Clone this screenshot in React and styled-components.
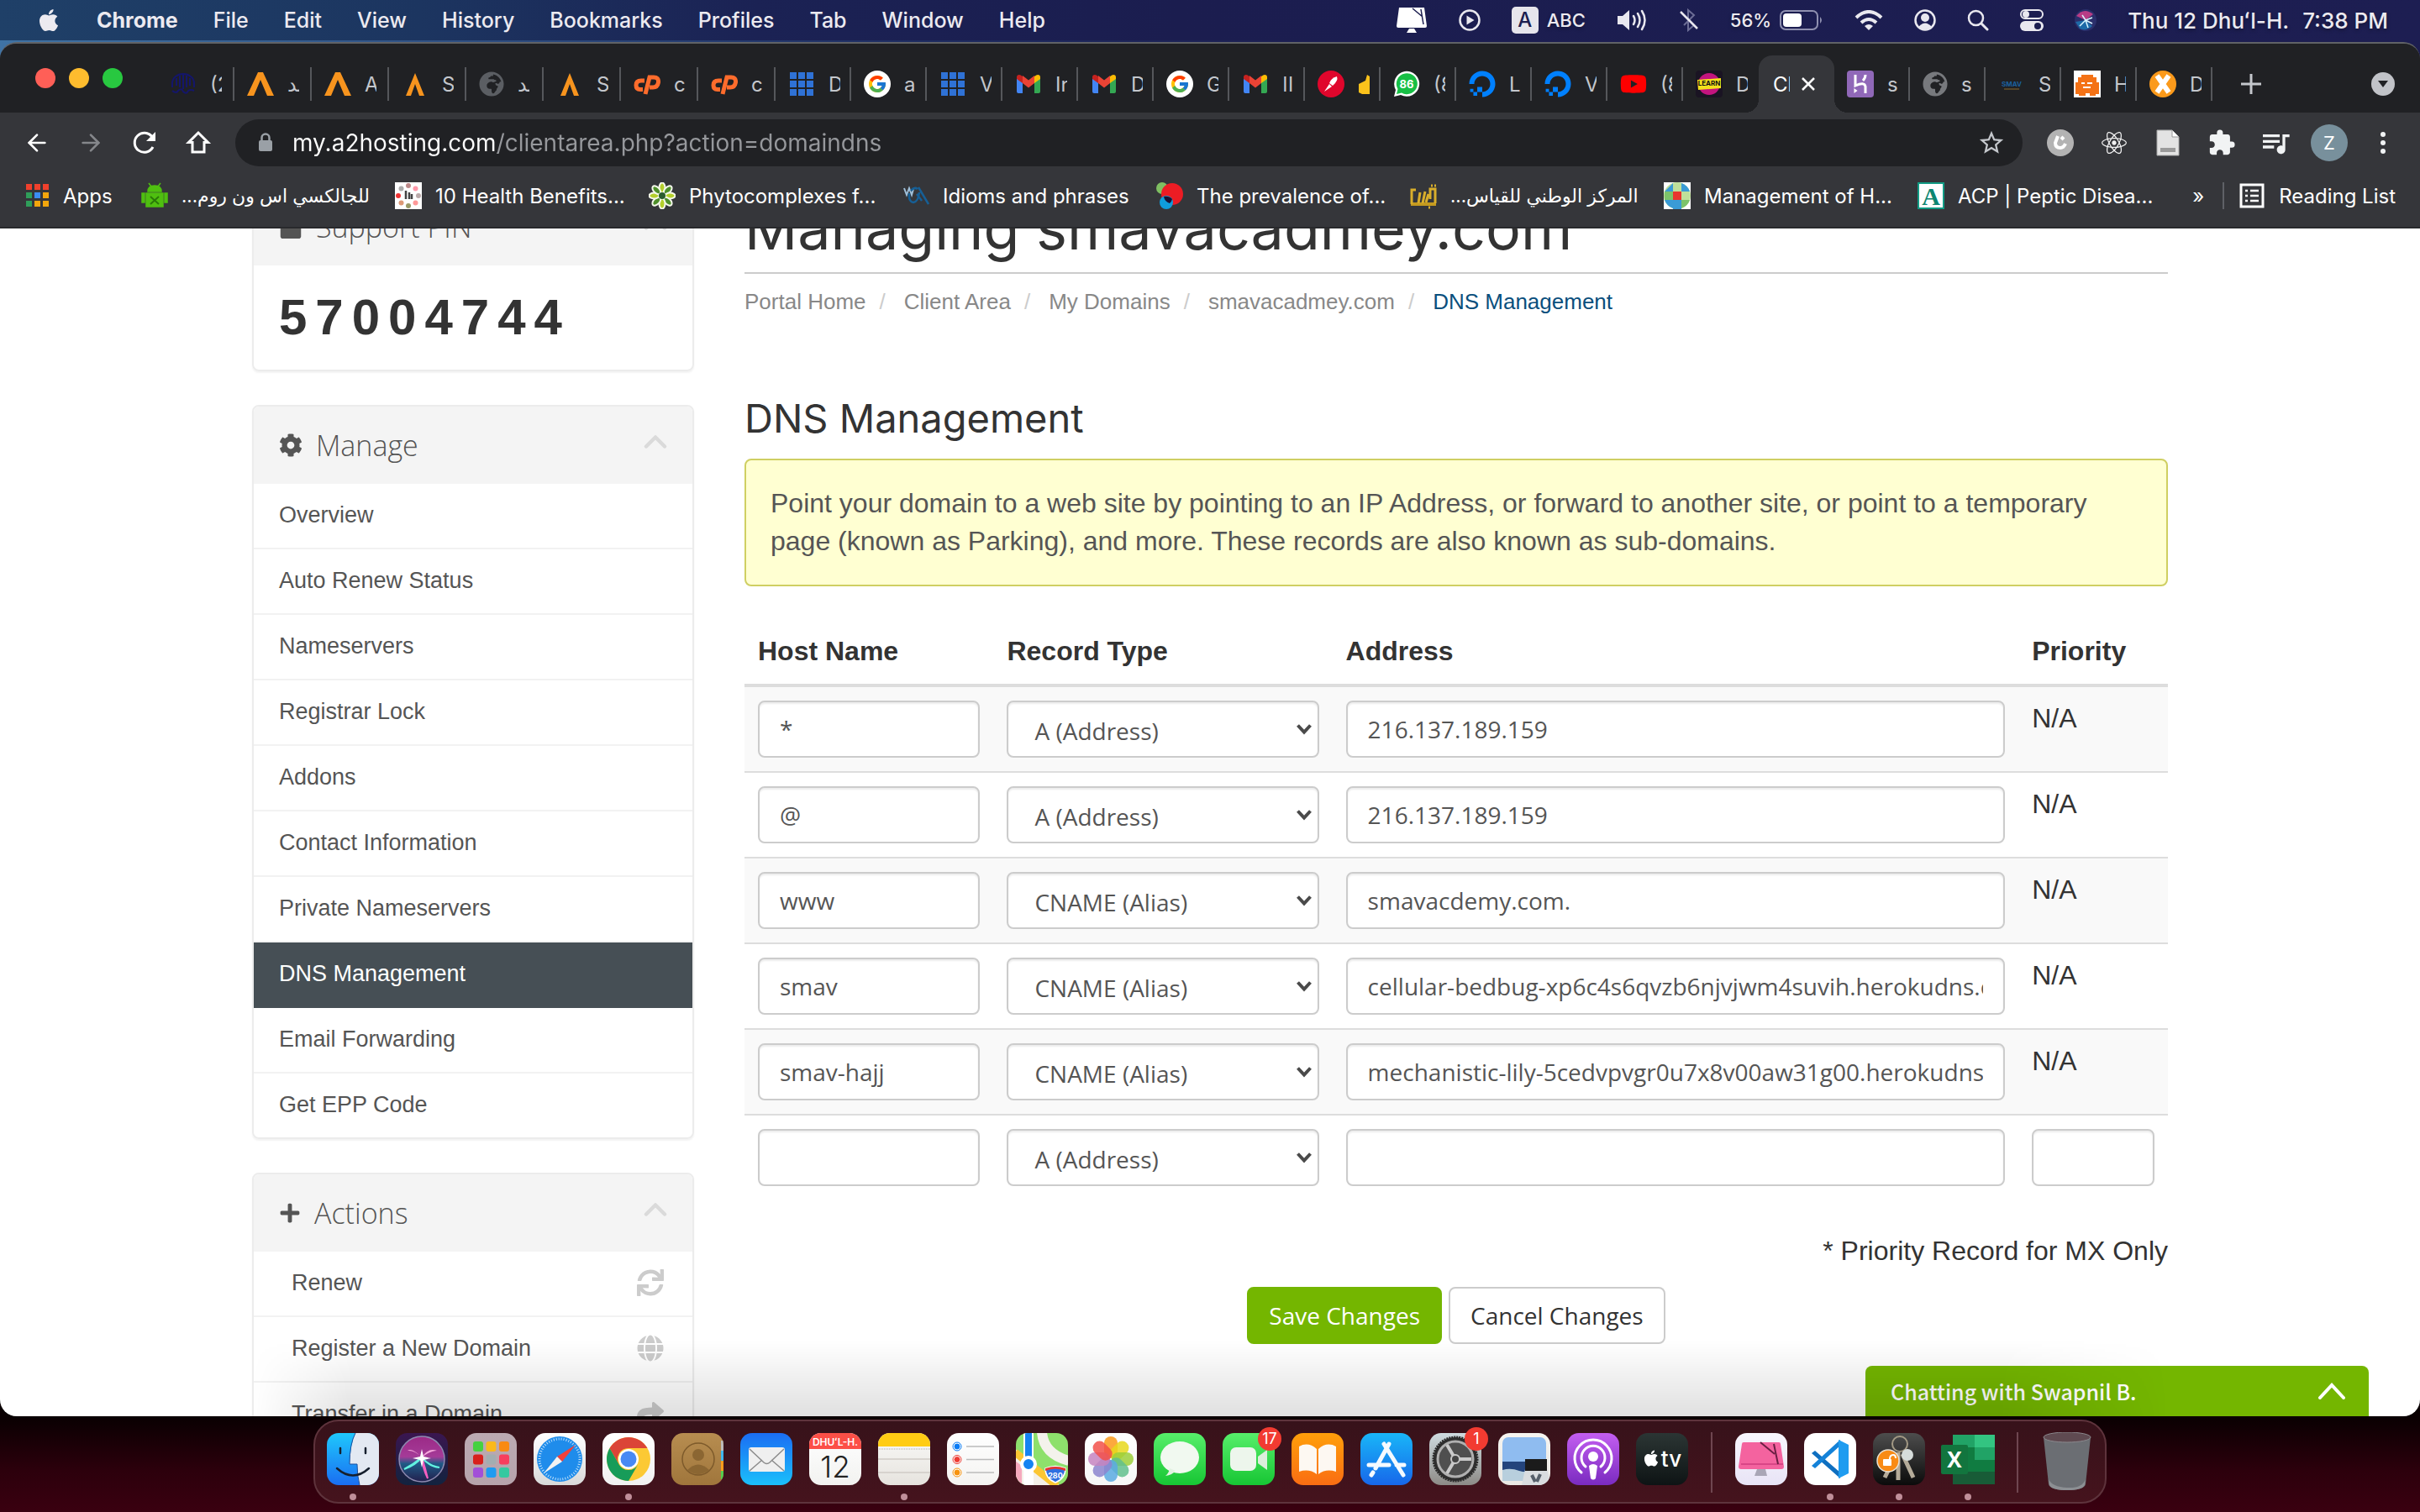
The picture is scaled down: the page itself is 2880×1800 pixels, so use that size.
import React from "react";
import styled, { createGlobalStyle, css } from "styled-components";
import { FaApple, FaDigitalOcean, FaYoutube, FaLock, FaCog, FaPlus, FaSync, FaGlobe, FaShare, FaReact, FaGlobeAfrica } from "react-icons/fa";
import { FcGoogle } from "react-icons/fc";
import { MdExtension, MdQueueMusic, MdStarBorder } from "react-icons/md";
import { ChevronUp, ArrowLeft, ArrowRight } from "lucide-react";

const ui = `Inter, "DejaVu Sans", sans-serif`;
const helvetica = `"Liberation Sans", Arial, sans-serif`;
const openSans = `"Open Sans", "Noto Sans", sans-serif`;

const GlobalStyle = createGlobalStyle`
  *, *::before, *::after { box-sizing: border-box; }
  body { margin: 0; }
  button { border: 0; padding: 0; background: none; font: inherit; color: inherit; cursor: pointer; }
  a { color: inherit; text-decoration: none; }
  ul, ol { list-style: none; margin: 0; padding: 0; }
  h1, h2, h3, p { margin: 0; font-weight: 400; }
  svg { display: block; flex: none; }
`;

/* ---------- desktop ---------- */

const Desktop = styled.div`
  display: flex;
  flex-direction: column;
  height: 100vh;
  overflow: hidden;
  font-family: ${ui};
  background:
    linear-gradient(90deg, #3f73a5, #1d2b60 1100px, #1c1d50 1600px) 0 0 / 100% 90px no-repeat,
    linear-gradient(#0a0002, #0a0002 calc(100% - 112px), #2c000c calc(100% - 50px), #3a0010);
`;

const MenuBar = styled.header`
  display: flex;
  align-items: center;
  justify-content: space-between;
  flex: none;
  height: 48px;
  padding: 0 38px 0 43px;
  margin-bottom: 2px;
  background: linear-gradient(90deg, #1f4068, #1c3560 500px, #1b2254 900px, #1b1d4f 1400px, #1d1e52);
  color: #eceaf0;
  font-size: 25px;
  text-shadow: 0 2px 4px rgba(0, 0, 0, 0.35);
`;

const MenuGroup = styled.nav`
  display: flex;
  align-items: center;
  gap: ${(p) => p.$gap}px;
`;

const MenuButton = styled.button`
  font-weight: ${(p) => (p.$bold ? 700 : 500)};
`;

const InputSource = styled.span`
  display: flex;
  align-items: center;
  gap: 10px;
  font-size: 22px;
  font-weight: 500;
`;

const SourceKey = styled.span`
  width: 32px;
  line-height: 32px;
  border-radius: 5px;
  background: #e6e5ec;
  color: #1b1d4f;
  text-align: center;
  text-shadow: none;
  font-size: 24px;
`;

const Battery = styled(InputSource)``;

const Clock = styled.time`
  display: flex;
  gap: 16px;
  font-weight: 500;
  font-size: 26px;
`;

/* ---------- browser ---------- */

const Browser = styled.section`
  position: relative;
  display: flex;
  flex-direction: column;
  flex: 1;
  min-height: 0;
  overflow: hidden;
  border: 0 solid #606266;
  border-top-width: 2px;
  border-radius: 20px;
  background: #35363a;
  color: #fff;
`;

const TabStrip = styled.div`
  display: flex;
  align-items: flex-end;
  flex: none;
  height: 82px;
  background: #202124;
`;

const TrafficLights = styled.div`
  display: flex;
  gap: 16px;
  align-self: center;
  padding: 0 41px 0 42px;
`;

const WindowButton = styled.button`
  width: 24px;
  height: 24px;
  border-radius: 50%;
  background: ${(p) => p.$color};
`;

const Tab = styled.button`
  display: flex;
  align-items: center;
  flex: 0 0 ${(p) => (p.$wide ? 92 : 90)}px;
  height: 68px;
  padding-left: 15px;
  gap: 16px;
  color: #c4c7cc;
  font-size: 24px;
  background: linear-gradient(#55575b, #55575b) right 14px / 2px 40px no-repeat;
  background-position: right 0 top 14px;
  ${(p) =>
    p.$active &&
    css`
      position: relative;
      gap: 12px;
      padding-left: 17px;
      border-radius: 16px 16px 0 0;
      background: #35363a;
      color: #fff;
      &::before, &::after {
        content: "";
        position: absolute;
        bottom: 0;
        left: -16px;
        width: 16px;
        height: 16px;
        background: radial-gradient(circle at 0 0, transparent 16px, #35363a 16px);
      }
      &::after { left: auto; right: -16px; transform: scaleX(-1); }
    `}
  ${(p) => p.$plain && css`background: none;`}
`;

const TabLabel = styled.span`
  width: ${(p) => (p.$active ? 20 : 14)}px;
  overflow: hidden;
  white-space: nowrap;
  text-align: left;
`;

const NewTab = styled.button`
  margin-left: 34px;
  height: 68px;
`;

const TabSearch = styled.button`
  display: grid;
  place-items: center;
  width: 28px;
  height: 28px;
  margin: 0 30px 20px auto;
  border-radius: 50%;
  background: #c1c3c8;
`;

const Toolbar = styled.div`
  display: flex;
  align-items: center;
  flex: none;
  height: 72px;
  padding: 0 22px 0 28px;
`;

const NavButtons = styled.div`
  display: flex;
  gap: 32px;
  margin-right: 28px;
`;

const Omnibox = styled.label`
  display: flex;
  align-items: center;
  flex: 1;
  height: 56px;
  padding: 0 20px 0 26px;
  gap: 22px;
  border-radius: 28px;
  background: #202124;
`;

const UrlInput = styled.input`
  flex: 1;
  min-width: 0;
  padding: 0;
  border: 0;
  outline: 0;
  color: #fff;
  font: 28px ${ui};
  background: linear-gradient(90deg, #fff 244px, #96989c 244px);
  background-clip: text;
  -webkit-text-fill-color: transparent;
`;

const Extensions = styled.div`
  display: flex;
  gap: 20px;
  margin-left: 23px;
  button { display: grid; place-items: center; width: 44px; height: 44px; }
`;

const Avatar = styled.button`
  border-radius: 50%;
  background: #78909c;
  font-size: 22px;
`;

const Bookmarks = styled.nav`
  display: flex;
  align-items: center;
  flex: none;
  height: 66px;
  padding: 0 29px 10px 31px;
  border-bottom: 2px solid #28292c;
  font-size: 24px;
`;

const Bookmark = styled.a`
  display: flex;
  align-items: center;
  gap: 16px;
  flex: 0 0 ${(p) => p.$width}px;
  min-width: 0;
  white-space: nowrap;
`;

const BookmarkLabel = styled.span`
  font-size: ${(p) => (p.$rtl ? 22 : 24)}px;
`;

const MoreBookmarks = styled.button`
  margin: 0 22px 0 auto;
`;

const ReadingList = styled.button`
  display: flex;
  align-items: center;
  gap: 17px;
  padding-left: 20px;
  height: 56px;
  background: linear-gradient(#5f6166, #5f6166) left center / 2px 32px no-repeat;
`;

/* ---------- web page ---------- */

const Viewport = styled.main`
  position: relative;
  flex: 1;
  min-height: 0;
  overflow: hidden;
  background: #fff;
  color: #333;
  font: 32px/46px ${helvetica};
  &::after {
    content: "";
    position: absolute;
    inset: auto 300px 0 300px;
    height: 90px;
    background: linear-gradient(transparent, rgba(0, 0, 0, 0.12));
    mask-image: linear-gradient(90deg, transparent, #000 120px, #000 calc(100% - 200px), transparent);
    pointer-events: none;
  }
`;

const Page = styled.div`
  display: grid;
  grid-template-columns: 526px minmax(0, 1fr);
  gap: 60px;
  max-width: 2280px;
  margin: -50px auto 0;
`;

const Sidebar = styled.aside`
  display: flex;
  flex-direction: column;
  gap: 40px;
`;

const Panel = styled.section`
  border: 2px solid #ececec;
  border-radius: 8px;
  box-shadow: 0 2px 2px rgba(0, 0, 0, 0.05);
  overflow: hidden;
  flex: none;
`;

const PanelHead = styled.h3`
  display: flex;
  align-items: center;
  gap: 16px;
  height: 92px;
  padding: 0 22px 0 30px;
  background: #f4f4f4;
  color: #555;
  font: 300 34px/46px ${openSans};
  button { margin: 0 0 8px auto; color: #dadada; }
`;

const Pin = styled.p`
  padding: 27px 30px;
  font-size: 60px;
  line-height: 70px;
  font-weight: 700;
  letter-spacing: 10px;
`;

const SideLink = styled.a`
  display: flex;
  align-items: center;
  justify-content: space-between;
  height: 78px;
  padding: 0 ${(p) => (p.$inset ? 34 : 30)}px 2px ${(p) => (p.$inset ? 45 : 30)}px;
  border-bottom: 2px solid #f2f2f2;
  font-size: 27px;
  color: #555;
  svg { color: #ccc; }
  ${(p) => p.$active && css`background: #464f55; color: #fff; border-color: #464f55;`}
  li:last-child & { border-bottom: 0; height: 76px; }
`;

const Title = styled.h1`
  padding-bottom: 2px;
  border-bottom: 2px solid #ccc;
  font: 400 70px/100px ${ui};
`;

const Crumbs = styled.ol`
  display: flex;
  margin-top: 13px;
  font-size: 26px;
  line-height: 40px;
  color: #888;
  li + li::before { content: "/"; margin: 0 22px 0 16px; color: #ccc; }
  li:last-child a { color: #0a4f7d; }
`;

const Heading = styled.h2`
  margin: 89px 0 18px;
  font: 400 47px/60px ${ui};
`;

const Notice = styled.p`
  padding: 29px 29px 29px;
  border: 2px solid #cfcf62;
  border-radius: 8px;
  background: #ffffd2;
  color: #555;
  font-size: 32px;
  line-height: 45px;
`;

const Records = styled.table`
  width: 100%;
  margin-top: 38px;
  table-layout: fixed;
  border-collapse: separate;
  border-spacing: 0;
  th { padding: 16px; border-bottom: 4px solid #ddd; text-align: left; }
  td { padding: 16px; border-bottom: 2px solid #ddd; vertical-align: top; line-height: 42px; }
  tbody tr:nth-child(odd) { background: #f9f9f9; }
  tbody tr:last-child td { border-bottom: 0; }
`;

const Col = styled.col`
  width: ${(p) => p.$width};
`;

const field = css`
  display: block;
  width: 100%;
  height: 68px;
  border: 2px solid #ccc;
  border-radius: 8px;
  background: #fff;
  box-shadow: inset 0 2px 2px rgba(0, 0, 0, 0.075);
  color: #555;
  font: 28px ${openSans};
`;

const Field = styled.input`
  ${field}
  padding: 0 24px;
`;

const SelectBox = styled.div`
  position: relative;
  svg { position: absolute; right: 8px; top: 27px; pointer-events: none; }
`;

const Select = styled.select`
  ${field}
  padding: 4px 31px 0;
  appearance: none;
`;

const Footnote = styled.p`
  margin-top: 38px;
  text-align: right;
`;

const Actions = styled.div`
  display: flex;
  justify-content: center;
  gap: 8px;
  margin-top: 20px;
`;

const Button = styled.button`
  height: 68px;
  padding: 0 24px;
  border: 2px solid ${(p) => (p.$primary ? "#74b600" : "#ccc")};
  border-radius: 8px;
  background: ${(p) => (p.$primary ? "#74b600" : "#fff")};
  color: ${(p) => (p.$primary ? "#fff" : "#333")};
  font: 28px ${openSans};
`;

const Chat = styled.button`
  position: absolute;
  right: 61px;
  bottom: 0;
  display: flex;
  align-items: center;
  justify-content: space-between;
  width: 599px;
  height: 60px;
  padding: 0 28px 0 30px;
  border-radius: 8px 8px 0 0;
  background: #74b600;
  color: #fff;
  font: 500 25px "Noto Sans CJK SC", sans-serif;
`;

/* ---------- dock ---------- */

const DockArea = styled.footer`
  display: flex;
  justify-content: center;
  flex: none;
  padding: 4px 0 10px;
`;

const DockBar = styled.ul`
  display: flex;
  gap: 18px;
  height: 100px;
  padding: 13px 13px 0;
  border: 2px solid #5e333c;
  border-radius: 30px;
  background: linear-gradient(#37121a, #45131d);
`;

const DockItem = styled.li`
  position: relative;
  display: flex;
  flex-direction: column;
  align-items: center;
  gap: 9px;
  width: 64px;
`;

const Dot = styled.i`
  width: 8px;
  height: 8px;
  border-radius: 50%;
  background: #c08f9a;
`;

const Badge = styled.span`
  position: absolute;
  top: -6px;
  right: -7px;
  width: 28px;
  line-height: 28px;
  border-radius: 50%;
  background: #f23b31;
  color: #fff;
  font-size: 18px;
  text-align: center;
`;

const DockRule = styled.li`
  width: 2px;
  height: 72px;
  margin: 0 8px;
  background: #6f4650;
`;

/* ---------- drawings ---------- */

const Svg = ({ w = 32, h, box, children }) => (
  <svg width={w} height={h || w} viewBox={box || `0 0 ${w} ${h || w}`} fill="none" aria-hidden="true">{children}</svg>
);

const Aws = ({ narrow }) => (
  <Svg w={32}>
    {narrow ? (
      <path d="M5 30 L16 3 L27 30 H21 L16 16 L11 30Z" fill="#f7941e" />
    ) : (
      <path d="M0 30 L13 2 H19 L32 30 H24 L16 11 L8 30Z" fill="#f7941e" />
    )}
  </Svg>
);
const Cpanel = () => (
  <Svg w={32}>
    <path d="M13 12H9q-6 0-6 5.500 0 5 5 5h3" stroke="#ff6c2c" strokeWidth="5" />
    <path d="M14 28L19 8h5q6 0 5.500 6-1 6-6.500 6h-4" stroke="#ff6c2c" strokeWidth="5" />
  </Svg>
);
const Grid9 = () => (
  <Svg w={32}>
    {[0, 10, 20].map((y) => [0, 10, 20].map((x) => <rect key={x + "-" + y} x={x + 2} y={y + 2} width="8" height="8" fill="#2f72d6" />))}
  </Svg>
);
const GoogleMark = () => (
  <Svg w={32}>
    <circle cx="16" cy="16" r="16" fill="#fff" />
    <g transform="translate(4 4)"><FcGoogle size={24} /></g>
  </Svg>
);
const Gmail = () => (
  <Svg w={32}>
    <path d="M2 27V9l7 5v13H4q-2 0-2-2z" fill="#4285f4" />
    <path d="M30 27V9l-7 5v13h5q2 0 2-2z" fill="#34a853" />
    <path d="M9 15V6l7 5.500 7-5.500v9l-7 5.500z" fill="#ea4335" />
    <path d="M2 8q0-3 3-3 1.500 0 4 2v8l-7-5z" fill="#c5221f" />
    <path d="M30 8q0-3-3-3-1.500 0-4 2v8l7-5z" fill="#fbbc04" />
  </Svg>
);
const RedFeather = () => (
  <Svg w={32}>
    <circle cx="16" cy="16" r="16" fill="#e0062c" />
    <path d="M8 25l6-9 3 3z" fill="#fff" />
    <path d="M14 15q2-6 9-8 2 5-5 11z" fill="#fff" />
  </Svg>
);
const WhatsApp = () => (
  <Svg w={32}>
    <path d="M1 31l2-8A15 15 0 1 1 9 29z" fill="#fff" />
    <path d="M4 28l1.500-6A12.500 12.500 0 1 1 10 26.500z" fill="#17bf45" />
    <text x="16" y="21" fontSize="13" fontWeight="700" fill="#fff" textAnchor="middle" fontFamily="Inter, sans-serif">86</text>
  </Svg>
);
const Learn = () => (
  <Svg w={32}>
    <rect width="32" height="32" rx="4" fill="#1a1423" />
    <circle cx="16" cy="16" r="13" fill="#c3147f" />
    <path d="M2 11l28-2v12L3 23z" fill="#f3e21c" />
    <text x="16" y="18" fontSize="8" fontWeight="700" fill="#111" textAnchor="middle" fontFamily="Inter, sans-serif">LEARN</text>
  </Svg>
);
const Heroku = () => (
  <Svg w={32}>
    <rect width="32" height="32" rx="4" fill="#9068b8" />
    <path d="M10 5v13q11-5 12 1v8M22 5q0 4-3 7" stroke="#fff" strokeWidth="3" />
    <path d="M8.500 21v6l4-3z" fill="#fff" />
  </Svg>
);
const Smav = () => (
  <Svg w={32}>
    <text x="16" y="19" fontSize="8" fontWeight="700" fill="#1a5f9c" textAnchor="middle" fontFamily="Inter, sans-serif">SMAV</text>
    <path d="M7 22h18" stroke="#8a6a2c" strokeWidth="1" />
  </Svg>
);
const OrangeBot = () => (
  <Svg w={32}>
    <rect width="32" height="32" fill="#fff" />
    <path d="M9 5h14v3h4v6h3v14h-4v2h-7v-3h-5v3H6v-2H2V14h3V8h4z" fill="#f47216" />
    <path d="M9 15h4M16 15h6M11 20h9" stroke="#fff" strokeWidth="2" />
  </Svg>
);
const Xmark = () => (
  <Svg w={32}>
    <circle cx="16" cy="16" r="16" fill="#fb9a1b" />
    <path d="M9 6l14 20M23 6L9 26" stroke="#fff" strokeWidth="6" />
  </Svg>
);
const Dome = () => (
  <Svg w={32}>
    <path d="M3 20V15A13 11 0 0 1 29 15V20M8 18V9M12 20V6M16 22V4M20 20V6M24 18V9M3 24q5 4 7 0 4-4 6 1 4 4 6-1 3-2 7 0" stroke="#14166b" strokeWidth="2" />
  </Svg>
);
const Thumb = () => (
  <Svg w={14} h={24}><path d="M1 22V12l8-4 2-7 3 2v21H5z" fill="#fcc21b" /></Svg>
);

const tabs = [
  { icon: <Dome />, label: "(2" },
  { icon: <Aws />, label: "ند" },
  { icon: <Aws />, label: "A" },
  { icon: <Aws narrow />, label: "S" },
  { icon: <FaGlobeAfrica size={30} color="#5b5e63" />, label: "ند" },
  { icon: <Aws narrow />, label: "S" },
  { icon: <Cpanel />, label: "c" },
  { icon: <Cpanel />, label: "c" },
  { icon: <Grid9 />, label: "D" },
  { icon: <GoogleMark />, label: "a" },
  { icon: <Grid9 />, label: "V" },
  { icon: <Gmail />, label: "In" },
  { icon: <Gmail />, label: "D" },
  { icon: <GoogleMark />, label: "G" },
  { icon: <Gmail />, label: "اا" },
  { icon: <RedFeather />, label: <Thumb /> },
  { icon: <WhatsApp />, label: "(8" },
  { icon: <FaDigitalOcean size={32} color="#0080ff" />, label: "L" },
  { icon: <FaDigitalOcean size={32} color="#0080ff" />, label: "V" },
  { icon: <FaYoutube size={32} color="#f00" />, label: "(8" },
  { icon: <Learn />, label: "D", plain: true },
  { label: "Cl", active: true },
  { icon: <Heroku />, label: "s" },
  { icon: <FaGlobeAfrica size={30} color="#77797d" />, label: "s" },
  { icon: <Smav />, label: "S" },
  { icon: <OrangeBot />, label: "H" },
  { icon: <Xmark />, label: "D" },
];

const AppsIcon = () => (
  <Svg w={28}>
    {["#f0402c", "#f0402c", "#f0402c", "#2f9e5a", "#3b8df5", "#f2a60d", "#2f9e5a", "#f2a60d", "#f2a60d"].map((c, i) => (
      <rect key={i} x={(i % 3) * 10} y={Math.floor(i / 3) * 10} width="7" height="7" fill={c} />
    ))}
  </Svg>
);
const Android = () => (
  <Svg w={32}>
    <path d="M8 11q0-7 8-7t8 7zM6 13h20v16H6zM1 13h3v11H1zM28 13h3v11h-3zM9 1l3 4M23 1l-3 4" fill="#4fbf10" stroke="#4fbf10" strokeWidth="1.500" />
    <path d="M11 17l10 9M21 17l-10 9" stroke="#2a7a08" strokeWidth="2" />
  </Svg>
);
const Health = () => (
  <Svg w={32}>
    <rect width="32" height="32" fill="#fff" />
    {["#b88", "#f9a", "#baa", "#f99", "#996", "#d97", "#e33", "#aaa"].map((c, i) => {
      const a = (i * Math.PI) / 4;
      return <circle key={i} cx={16 + 12 * Math.sin(a)} cy={16 - 12 * Math.cos(a)} r="3" fill={c} />;
    })}
    <path d="M13 10v10M17 12v8M20 14v6" stroke="#444" strokeWidth="2.500" />
  </Svg>
);
const Flower = () => (
  <Svg w={32}>
    {[0, 45, 90, 135, 180, 225, 270, 315].map((a) => (
      <ellipse key={a} cx="16" cy="6.500" rx="3.500" ry="6" fill={a % 90 ? "#4e8f2a" : "#b4cf2c"} stroke="#f4f8ea" strokeWidth="2" transform={`rotate(${a} 16 16)`} />
    ))}
    <circle cx="16" cy="16" r="4" fill="#2b5c2e" />
  </Svg>
);
const Idioms = () => (
  <Svg w={32}>
    <path d="M2 7l3 8 3-8 3 8 2-7" stroke="#9fc0da" strokeWidth="2" />
    <path d="M8 13q-1 10 5 11 6-1 7-12M10 10q4-5 8-2M19 6l12 20M17 14l6 8" stroke="#165f96" strokeWidth="2.500" />
  </Svg>
);
const Prevalence = () => (
  <Svg w={32}>
    <circle cx="7" cy="7" r="7" fill="#7fbf62" />
    <circle cx="19" cy="14" r="13" fill="#ec1c24" />
    <circle cx="12" cy="24" r="8" fill="#0f9ddb" />
    <path d="M9 17q6-1 10 3-1 4-3 5-6-2-7-8z" fill="#1b1133" />
  </Svg>
);
const Qiyas = () => (
  <Svg w={32}>
    <path d="M1 26h30" stroke="#c49a1f" strokeWidth="4" />
    <path d="M2 26V9h5M10 25l2-13M15 25l3-14M19 24l3-10M24 20V8h6v17M25 4h2M29 4h2M22 30h2" stroke="#d9ae2b" strokeWidth="3" />
  </Svg>
);
const Cochrane = () => (
  <Svg w={32}>
    <rect width="32" height="32" fill="#fff" />
    <circle cx="16" cy="16" r="16" fill="#bfe09a" />
    <path d="M21 1a16 16 0 0 1 10 10H21zM11 31A16 16 0 0 1 1 21h10zM11 21h10v11H11zM1 11h10V1" fill="#3a9bd6" />
    <path d="M21 21h10a16 16 0 0 1-10 10zM1 11h10v10H1z" fill="#7cc36a" />
    <rect x="11" y="11" width="10" height="10" fill="#e8352e" />
  </Svg>
);
const Acp = () => (
  <Svg w={32}>
    <rect x="1" y="1" width="30" height="30" fill="#fff" stroke="#129b84" strokeWidth="2" />
    <text x="16" y="27" fontSize="30" fill="#0d8672" textAnchor="middle" fontFamily="Liberation Serif, serif" fontWeight="700">A</text>
  </Svg>
);

const bookmarks = [
  { icon: <Android />, label: "للجالكسي اس ون روم...", rtl: true },
  { icon: <Health />, label: "10 Health Benefits..." },
  { icon: <Flower />, label: "Phytocomplexes f..." },
  { icon: <Idioms />, label: "Idioms and phrases" },
  { icon: <Prevalence />, label: "The prevalence of..." },
  { icon: <Qiyas />, label: "المركز الوطني للقياس...", rtl: true },
  { icon: <Cochrane />, label: "Management of H..." },
  { icon: <Acp />, label: "ACP | Peptic Disea..." },
];

/* Dock tiles share one rounded square filled with a vertical gradient. */
const Tile = ({ id, from, to, children }) => (
  <svg width="64" height="64" viewBox="0 0 64 64" fill="none" aria-hidden="true">
    <defs>
      <linearGradient id={id} x1="0" y1="0" x2="0" y2="1"><stop stopColor={from} /><stop offset="1" stopColor={to} /></linearGradient>
      <clipPath id={id + "-clip"}><rect x="1" y="1" width="62" height="62" rx="14" /></clipPath>
    </defs>
    <g clipPath={`url(#${id}-clip)`}>
      <rect x="1" y="1" width="62" height="62" fill={`url(#${id})`} />
      {children}
    </g>
  </svg>
);

const dock = [
  { name: "Finder", run: true, art: <Tile id="finder" from="#1fc8fc" to="#1a6ef2"><path d="M35 1H63V63H40Q37 52 37 38H28Q29 14 35 1z" fill="#e3e9f2" /><path d="M35 1Q28 14 28 38H37Q37 52 40 63" stroke="#1c4f9c" strokeWidth="1" /><path d="M17 19v6M47 19v6M13 43q19 17 38 0" stroke="#16202e" strokeWidth="2.500" strokeLinecap="round" /></Tile> },
  { name: "Siri", art: <Tile id="siri" from="#3a1650" to="#12233f"><defs><linearGradient id="siri-orb" x1="0" y1="0" x2="0" y2="1"><stop stopColor="#9b2a86" /><stop offset="0.45" stopColor="#a53b98" /><stop offset="0.6" stopColor="#205a86" /><stop offset="1" stopColor="#231f4d" /></linearGradient></defs><circle cx="32" cy="32" r="27" fill="url(#siri-orb)" stroke="#8e8ab0" strokeWidth="1.500" /><path d="M32 30Q24 40 11 44 22 38 32 30zM32 30q8 10 21 12-12-1-21-12z" fill="#62f2e0" stroke="#62f2e0" strokeWidth="2" /><path d="M32 30q4 12 7 25-6-12-7-25z" fill="#f55fc0" stroke="#f55fc0" strokeWidth="2" /><path d="M32 30Q20 18 15 22q8-1 17 8zM32 30q8-12 18-8-8 0-18 8z" fill="#f6a7dc" /><path d="M32 20l2 9 9 2-9 2-2 9-2-9-9-2 9-2z" fill="#fff" /></Tile> },
  { name: "Launchpad", art: <Tile id="launch" from="#bcaab2" to="#b6a3ab">{["#46d13f", "#fbb91b", "#f98a13", "#d8201c", "#a3adb1", "#f83e5d", "#a24fd8", "#1e9bf0", "#35c9a0"].map((c, i) => <rect key={i} x={11 + (i % 3) * 15.500} y={11 + Math.floor(i / 3) * 15.500} width="12" height="12" rx="3" fill={c} />)}</Tile> },
  { name: "Safari", art: <Tile id="safari" from="#ffffff" to="#d9d9d9"><circle cx="32" cy="32" r="27" fill="#1f8ceb" /><circle cx="32" cy="32" r="24" stroke="#bfe0fa" strokeWidth="3" strokeDasharray="1 2" /><path d="M51 15L35 35 29 29z" fill="#f2403a" /><path d="M13 49L35 35 29 29z" fill="#f2f2f2" /></Tile> },
  { name: "Chrome", run: true, art: <Tile id="chrome" from="#ffffff" to="#f1f1f1"><circle cx="32" cy="32" r="26" fill="#fcc934" /><path d="M9.500 19A26 26 0 0 1 54.500 19H32A13 13 0 0 0 20.700 38.500z" fill="#db4437" /><path d="M9.500 19A26 26 0 0 0 32 58L43.300 38.500A13 13 0 0 1 20.700 38.500z" fill="#179c59" /><circle cx="32" cy="32" r="12" fill="#fff" /><circle cx="32" cy="32" r="9.500" fill="#4889f4" /></Tile> },
  { name: "Contacts", art: <Tile id="contacts" from="#b78d50" to="#a0763c"><path d="M60 10h4v12h-4z" fill="#bbb" /><path d="M60 22h4v12h-4z" fill="#3fb7ee" /><path d="M60 34h4v12h-4z" fill="#ff9d1c" /><path d="M60 46h4v10h-4z" fill="#54cf4d" /><circle cx="33" cy="32" r="19" stroke="#7d5a2b" strokeWidth="1.500" /><circle cx="33" cy="27" r="7" fill="#8b6632" /><path d="M20 45q13-13 26 0-13 10-26 0z" fill="#8b6632" /></Tile> },
  { name: "Mail", art: <Tile id="mail" from="#1b6df3" to="#1bc0fb"><rect x="11" y="18" width="43" height="29" rx="3" fill="#efefef" /><path d="M12 20l17 16q3.500 3 7 0l17-16M12 46l15-13M53 46L38 33" stroke="#8b8b8b" strokeWidth="1.500" /></Tile> },
  { name: "Calendar", art: <Tile id="cal" from="#ffffff" to="#f2f2f0"><rect width="64" height="20" fill="#fc4f47" /><text x="32" y="16" fontSize="12" fontWeight="600" fill="#fff" textAnchor="middle" fontFamily="Inter, sans-serif">DHUʻL-H.</text><text x="32" y="54" fontSize="35" fontWeight="300" fill="#222" textAnchor="middle" fontFamily="Inter, sans-serif">12</text></Tile> },
  { name: "Notes", run: true, art: <Tile id="notes" from="#fafaf8" to="#e6e3de"><rect width="64" height="17" fill="#ffcc14" /><path d="M0 20h64" stroke="#aaa" strokeWidth="1" strokeDasharray="1 1" /><path d="M0 32h64M0 48h64" stroke="#cfccc6" strokeWidth="1.500" /></Tile> },
  { name: "Reminders", art: <Tile id="remind" from="#ffffff" to="#f4f3f1">{["#0a7cf5", "#ee3b33", "#f7930f"].map((c, i) => <g key={c}><circle cx="13" cy={17 + i * 15.500} r="4" fill={c} stroke="#fff" strokeWidth="1" /><circle cx="13" cy={17 + i * 15.500} r="5" stroke={c} strokeWidth="1" /><path d={`M24 ${17 + i * 15.500}h33`} stroke="#bbb" strokeWidth="1.500" /></g>)}</Tile> },
  { name: "Maps", art: <Tile id="maps" from="#8ee06c" to="#8ee06c"><path d="M0 20L54 64H0z" fill="#f4f0e8" /><path d="M0 24l50 40" stroke="#fbc632" strokeWidth="9" /><path d="M0 34v30h8V40z" fill="#f5a9bd" /><path d="M32 0Q34 26 64 34" stroke="#f4f2ec" strokeWidth="12" /><path d="M10 0h12v64H10z" fill="#fff" /><path d="M12 0h8v34h-8z" fill="#1583f2" /><circle cx="16" cy="38" r="8" fill="#1583f2" stroke="#fff" strokeWidth="4" /><path d="M36 43q12-5 24 0 0 12-12 17-12-5-12-17z" fill="#2f6fe0" stroke="#fff" strokeWidth="1.500" /><path d="M36 46q12-5 24 0v-3q-12-4-24 0z" fill="#e8352e" /><text x="48" y="55" fontSize="9" fontWeight="700" fill="#fff" textAnchor="middle" fontFamily="Inter, sans-serif">280</text></Tile> },
  { name: "Photos", art: <Tile id="photos" from="#ffffff" to="#f6f6f6">{["#fb9a1c", "#e8d81c", "#9bcf3a", "#62bf8d", "#5aaae2", "#8c85cf", "#c684c0", "#f2504a"].map((c, i) => <rect key={c} x="24" y="5" width="16" height="26" rx="8" fill={c} fillOpacity="0.85" transform={`rotate(${i * 45} 32 32)`} />)}</Tile> },
  { name: "Messages", art: <Tile id="messages" from="#57ee6a" to="#17c634"><ellipse cx="32" cy="30" rx="23" ry="19" fill="#f1f9f0" /><path d="M20 43q-1 6-5 9 8-1 12-6z" fill="#e3f2e2" /></Tile> },
  { name: "FaceTime", badge: "17", art: <Tile id="facetime" from="#57ee6a" to="#17c634"><rect x="10" y="18" width="31" height="28" rx="7" fill="#edf6ec" /><path d="M43 29l11-8v24l-11-8z" fill="#dceedb" /></Tile> },
  { name: "Books", art: <Tile id="books" from="#ff9f0a" to="#fa6d13"><path d="M31 20Q21 11 10 17V47Q22 43 31 50zM33 20Q43 11 54 17V47Q42 43 33 50z" fill="#fdf8f2" /></Tile> },
  { name: "App Store", art: <Tile id="appstore" from="#19b6f8" to="#1767ea"><path d="M35 14L19 43M29 14l23 37M11 39h24M44 39h9M16 48l-2 3" stroke="#f5faff" strokeWidth="5" strokeLinecap="round" /></Tile> },
  { name: "System Preferences", badge: "1", art: <Tile id="prefs" from="#cfdbe0" to="#8d8b87"><circle cx="32" cy="32" r="26" stroke="#2b2b2b" strokeWidth="3" strokeDasharray="2 1" fill="#2f2f2f" /><circle cx="32" cy="32" r="21" fill="#4f4f4f" stroke="#b0b0b0" strokeWidth="3" /><path d="M32 32H51M32 32L22 15M32 32L22 49" stroke="#c9c9c9" strokeWidth="4" /><circle cx="32" cy="32" r="5" fill="#444" stroke="#c9c9c9" strokeWidth="2" /></Tile> },
  { name: "Preview", art: <Tile id="preview" from="#f6f4f0" to="#eae8e4"><rect x="6" y="6" width="52" height="52" rx="7" fill="#8fbcf0" /><path d="M6 35h52v12H6z" fill="#24447c" /><path d="M6 45q10-3 20 1t32-1v13H6z" fill="#b8cfdd" /><path d="M33 44h26l5 19H29z" fill="#d9dde0" /><path d="M33 32h26v14H33z" fill="#1b1b1b" /><path d="M41 51l4 8M51 50l-4 9" stroke="#56606b" strokeWidth="4" /></Tile> },
  { name: "Podcasts", art: <Tile id="podcasts" from="#c35ef0" to="#7a2bc0"><path d="M18 48A22 22 0 1 1 46 48M23 41A14 14 0 1 1 41 41" stroke="#fff" strokeWidth="3" strokeLinecap="round" /><circle cx="32" cy="29" r="6" fill="#fff" /><path d="M27 40q5-4 10 0l-2 15q-3 3-6 0z" fill="#fff" /></Tile> },
  { name: "TV", art: <Tile id="tv" from="#2b3534" to="#0e1415"><g transform="translate(8 20)"><FaApple size={22} color="#fff" /></g><text x="43" y="41" fontSize="26" fontWeight="500" fill="#fff" textAnchor="middle" fontFamily="Inter, sans-serif">tv</text></Tile> },
  null,
  { name: "CleanMyMac", art: <Tile id="cmm" from="#f8f6fd" to="#e8e4f6"><path d="M11 12h42q2 0 2 2l4 27q0 3-3 3H8q-3 0-3-3L9 14q0-2 2-2z" fill="#f4639f" /><path d="M8 38h50" stroke="#d94687" strokeWidth="2" /><path d="M31 12l17 14M47 14l5 24" stroke="#6b1f44" strokeWidth="2" /><path d="M27 44h10l2 8H24z" fill="#a9a6b6" /></Tile> },
  { name: "VS Code", run: true, art: <Tile id="vscode" from="#ffffff" to="#ffffff"><path d="M10 25l4-3 30 26v7z" fill="#0f6fc0" /><path d="M10 40l4 3 30-27V9z" fill="#1482d8" /><path d="M42 9l12 6v34l-12 6z" fill="#1f9cf0" /></Tile> },
  { name: "Keychain Access", run: true, art: <Tile id="keychain" from="#4d4d4d" to="#0b0b0b"><ellipse cx="33" cy="14" rx="9" ry="9" stroke="#a49a85" strokeWidth="2" /><path d="M31 24V57M36 26l13 28M28 28L15 54" stroke="#b5ab99" strokeWidth="5" /><circle cx="42" cy="27" r="7" fill="#d6dcda" /><circle cx="19" cy="34" r="13" fill="#f98b15" stroke="#e8e0d2" strokeWidth="1.500" /><rect x="13" y="32" width="10" height="8" rx="1" fill="#fff" /><path d="M21 32q0-5 4-5 3 0 3 4" stroke="#fff" strokeWidth="2" /></Tile> },
  { name: "Excel", run: true, art: (
    <svg width="64" height="64" viewBox="0 0 64 64" aria-hidden="true">
      <path d="M14 3H40V18H14z" fill="#21a366" /><path d="M40 3h25v15H40z" fill="#33c481" /><path d="M14 18h26v15H14z" fill="#107c41" /><path d="M40 18h25v15H40z" fill="#21a366" /><path d="M14 33h51v14H14z" fill="#107c41" /><path d="M14 47h51v15H14z" fill="#185c37" />
      <rect x="0" y="15" width="32" height="35" rx="2" fill="#12753e" />
      <text x="16" y="42" fontSize="26" fontWeight="700" fill="#fff" textAnchor="middle" fontFamily="Open Sans, sans-serif">X</text>
    </svg>) },
  null,
  { name: "Trash", art: (
    <svg width="64" height="72" viewBox="0 0 64 72" aria-hidden="true">
      <path d="M4 6L10 62q2 7 22 7t22-7L60 6z" fill="#6b6e73" /><path d="M10 56q4 9 22 10t22-10l-1 7q-3 6-21 6t-21-6z" fill="#8c8f93" /><ellipse cx="32" cy="6" rx="28" ry="6" fill="#5f4a51" stroke="#8b888d" strokeWidth="1" />
    </svg>) },
];

/* ---------- page data ---------- */

const manageLinks = ["Overview", "Auto Renew Status", "Nameservers", "Registrar Lock", "Addons", "Contact Information", "Private Nameservers", "DNS Management", "Email Forwarding", "Get EPP Code"];

const actionLinks = [
  { label: "Renew", Icon: FaSync },
  { label: "Register a New Domain", Icon: FaGlobe },
  { label: "Transfer in a Domain", Icon: FaShare },
];

const crumbs = ["Portal Home", "Client Area", "My Domains", "smavacadmey.com", "DNS Management"];

const recordTypes = ["A (Address)", "CNAME (Alias)"];
const records = [
  { host: "*", type: 0, address: "216.137.189.159" },
  { host: "@", type: 0, address: "216.137.189.159" },
  { host: "www", type: 1, address: "smavacdemy.com." },
  { host: "smav", type: 1, address: "cellular-bedbug-xp6c4s6qvzb6njvjwm4suvih.herokudns.com." },
  { host: "smav-hajj", type: 1, address: "mechanistic-lily-5cedvpvgr0u7x8v00aw31g00.herokudns.com." },
  { host: "", type: 0, address: "", priority: true },
];

function MacMenu() {
  return (
    <MenuBar>
      <MenuGroup $gap={42}>
        <FaApple size={30} />
        {["Chrome", "File", "Edit", "View", "History", "Bookmarks", "Profiles", "Tab", "Window", "Help"].map((m, i) => (
          <MenuButton key={m} $bold={i === 0}>{m}</MenuButton>
        ))}
      </MenuGroup>
      <MenuGroup $gap={37} aria-label="Status">
        <Svg w={38} h={32}><path d="M4 1h30l3 22q0 2-2 2H3q-2 0-2-2zM16 26h6l3 5H13z" fill="#fff" /><path d="M20 2l12 10M30 3l3 18" stroke="#1b1d4f" strokeWidth="1.500" /></Svg>
        <Svg w={26}><circle cx="13" cy="13" r="11.500" stroke="#e9e8ef" strokeWidth="2.500" /><path d="M9.500 7.500l9 5.500-9 5.500z" fill="#e9e8ef" /></Svg>
        <InputSource><SourceKey>A</SourceKey>ABC</InputSource>
        <Svg w={37} h={28}><path d="M1 9h6l8-7v24l-8-7H1z" fill="#e9e8ef" /><path d="M20 9q3 5 0 10M25 6q5 8 0 16M30 3q7 11 0 22" stroke="#e9e8ef" strokeWidth="2.500" strokeLinecap="round" /></Svg>
        <Svg w={24} h={28}><path d="M6 8l12 12-7 6V2l7 6L6 20" stroke="#6d6e96" strokeWidth="2" /><path d="M2 4l20 20" stroke="#e9e8ef" strokeWidth="2.500" /></Svg>
        <Battery>56%<Svg w={52} h={24}><rect x="1" y="1" width="44" height="22" rx="6" stroke="#8f90b0" strokeWidth="2" /><rect x="4" y="4" width="22" height="16" rx="4" fill="#fff" /><path d="M48 8q4 4 0 8z" fill="#8f90b0" /></Svg></Battery>
        <Svg w={34} h={25}><path d="M2 9Q17-5 32 9M8 15q9-8 18 0" stroke="#e9e8ef" strokeWidth="4" /><path d="M12 19q5-4 10 0l-5 5z" fill="#e9e8ef" /></Svg>
        <Svg w={26}><circle cx="13" cy="13" r="11.500" stroke="#e9e8ef" strokeWidth="2.500" /><circle cx="13" cy="10" r="5" fill="#e9e8ef" /><path d="M5 21q8-9 16 0-8 6-16 0z" fill="#e9e8ef" /></Svg>
        <Svg w={26}><circle cx="10.500" cy="10.500" r="8.500" stroke="#e9e8ef" strokeWidth="2.500" /><path d="M17 17l7 7" stroke="#e9e8ef" strokeWidth="3" strokeLinecap="round" /></Svg>
        <Svg w={28} h={26}><rect x="1" y="1" width="26" height="10" rx="5" stroke="#e9e8ef" strokeWidth="2" /><circle cx="7" cy="6" r="4" fill="#e9e8ef" /><rect y="14" width="28" height="12" rx="6" fill="#e9e8ef" /><circle cx="21" cy="20" r="4" fill="#1b1d4f" /></Svg>
        <Svg w={26}><circle cx="13" cy="13" r="13" fill="#2b2f6b" /><path d="M2 8Q11-3 22 6l-9 7z" fill="#b83c86" /><path d="M1 15l12-2 8 7q-8 7-15 3z" fill="#1d6aa8" /><path d="M13 13L6 20M13 13l8 4M13 13l3 9M13 13L9 7M13 13l8-3" stroke="#d8f4ff" strokeWidth="1.500" /></Svg>
        <Clock><span>Thu 12 Dhuʻl-H.</span><span>7:38 PM</span></Clock>
      </MenuGroup>
    </MenuBar>
  );
}

function BrowserChrome() {
  return (
    <>
      <TabStrip>
        <TrafficLights>
          <WindowButton aria-label="Close" $color="#ff5f57" />
          <WindowButton aria-label="Minimise" $color="#febc2e" />
          <WindowButton aria-label="Zoom" $color="#28c840" />
        </TrafficLights>
        {tabs.map((t, i) => (
          <Tab key={i} $wide={i < 8} $active={t.active} $plain={t.plain}>
            {t.icon}
            <TabLabel $active={t.active}>{t.label}</TabLabel>
            {t.active && <Svg w={20}><path d="M3 3l14 14M17 3L3 17" stroke="#fff" strokeWidth="2.500" /></Svg>}
          </Tab>
        ))}
        <NewTab aria-label="New tab"><Svg w={24}><path d="M12 0v24M0 12h24" stroke="#c4c7cc" strokeWidth="3" /></Svg></NewTab>
        <TabSearch aria-label="Search tabs"><Svg w={14} h={10}><path d="M1 1h12L7 9z" fill="#202124" /></Svg></TabSearch>
      </TabStrip>
      <Toolbar>
        <NavButtons>
          <button aria-label="Back"><ArrowLeft size={32} /></button>
          <button aria-label="Forward"><ArrowRight size={32} color="#85878b" /></button>
          <button aria-label="Reload"><Svg w={32}><path d="M26 21A11.500 11.500 0 1 1 25 9" stroke="#fff" strokeWidth="3" /><path d="M29 3v11H18z" fill="#fff" /></Svg></button>
          <button aria-label="Home"><Svg w={32}><path d="M16 4L4.500 15.500H9V27h14V15.500h4.500z" stroke="#fff" strokeWidth="3" /></Svg></button>
        </NavButtons>
        <Omnibox>
          <Svg w={20} h={24}><rect x="2" y="9" width="16" height="13" rx="2" fill="#9aa0a6" /><path d="M5.500 10V6a4.500 4.500 0 0 1 9 0v4" stroke="#9aa0a6" strokeWidth="2.500" /></Svg>
          <UrlInput aria-label="Address and search bar" defaultValue="my.a2hosting.com/clientarea.php?action=domaindns" />
          <MdStarBorder size={34} color="#c4c7cc" />
        </Omnibox>
        <Extensions>
          <button aria-label="Link extension"><Svg w={32}><circle cx="16" cy="16" r="16" fill="#b3b3b3" /><path d="M13 8l-3 8q0 6 6 6 4 0 6-5M17 9l3 3" stroke="#fff" strokeWidth="4" /></Svg></button>
          <button aria-label="React tools"><FaReact size={30} color="#f1f1f1" /></button>
          <button aria-label="Document"><Svg w={28} h={32}><path d="M1 1h18l8 8v22H1z" fill="#e3e3e3" stroke="#aaa" /><path d="M19 1v8h8" fill="#fff" stroke="#999" /><rect x="5" y="22" width="18" height="5" fill="#9a9a9a" /></Svg></button>
          <button aria-label="Extensions"><MdExtension size={34} color="#f1f3f4" /></button>
          <button aria-label="Media"><MdQueueMusic size={40} color="#f1f3f4" /></button>
          <Avatar>Z</Avatar>
          <button aria-label="Menu"><Svg w={8} h={28}>{[4, 14, 24].map((y) => <circle key={y} cx="4" cy={y} r="3" fill="#f1f3f4" />)}</Svg></button>
        </Extensions>
      </Toolbar>
      <Bookmarks>
        <Bookmark href="#" $width={137}><AppsIcon />Apps</Bookmark>
        {bookmarks.map((b) => (
          <Bookmark key={b.label} href="#" $width={302}>{b.icon}<BookmarkLabel $rtl={b.rtl} dir={b.rtl ? "rtl" : "ltr"}>{b.label}</BookmarkLabel></Bookmark>
        ))}
        <MoreBookmarks aria-label="More bookmarks">»</MoreBookmarks>
        <ReadingList>
          <Svg w={30} h={30}><rect x="2" y="2" width="26" height="26" stroke="#fff" strokeWidth="3" /><path d="M7 9h3M7 15h3M7 21h3M13 9h10M13 15h10M13 21h10" stroke="#fff" strokeWidth="2.500" /></Svg>
          Reading List
        </ReadingList>
      </Bookmarks>
    </>
  );
}

function SidePanel({ icon, title, children }) {
  return (
    <Panel>
      <PanelHead>{icon}{title}<button aria-label={`Collapse ${title}`}><ChevronUp size={44} strokeWidth={2.5} /></button></PanelHead>
      {children}
    </Panel>
  );
}

function DnsTable() {
  return (
    <Records>
      <colgroup><Col $width="17.5%" /><Col $width="23.8%" /><Col $width="auto" /><Col $width="10.5%" /></colgroup>
      <thead><tr><th>Host Name</th><th>Record Type</th><th>Address</th><th>Priority</th></tr></thead>
      <tbody>
        {records.map((r, i) => (
          <tr key={i}>
            <td><Field aria-label="Host Name" defaultValue={r.host} /></td>
            <td>
              <SelectBox>
                <Select aria-label="Record Type" defaultValue={recordTypes[r.type]}>
                  {recordTypes.map((t) => <option key={t}>{t}</option>)}
                </Select>
                <Svg w={20} h={14}><path d="M2.500 2.500l7.500 8 7.500-8" stroke="#4a4a4a" strokeWidth="4" /></Svg>
              </SelectBox>
            </td>
            <td><Field aria-label="Address" defaultValue={r.address} /></td>
            <td>{r.priority ? <Field aria-label="Priority" /> : "N/A"}</td>
          </tr>
        ))}
      </tbody>
    </Records>
  );
}

export default function App() {
  return (
    <Desktop>
      <GlobalStyle />
      <MacMenu />
      <Browser>
        <BrowserChrome />
        <Viewport>
          <Page>
            <Sidebar>
              <SidePanel icon={<FaLock size={28} />} title="Support PIN"><Pin>57004744</Pin></SidePanel>
              <SidePanel icon={<FaCog size={28} />} title="Manage">
                <ul>{manageLinks.map((l) => <li key={l}><SideLink href="#" $active={l === "DNS Management"}>{l}</SideLink></li>)}</ul>
              </SidePanel>
              <SidePanel icon={<FaPlus size={26} />} title="Actions">
                <ul>{actionLinks.map(({ label, Icon }) => <li key={label}><SideLink href="#" $inset>{label}<Icon size={32} /></SideLink></li>)}</ul>
              </SidePanel>
            </Sidebar>
            <div>
              <Title>Managing smavacadmey.com</Title>
              <Crumbs>{crumbs.map((c) => <li key={c}><a href="#">{c}</a></li>)}</Crumbs>
              <Heading>DNS Management</Heading>
              <Notice>
                Point your domain to a web site by pointing to an IP Address, or forward to another site, or point to a temporary page (known as Parking), and more. These records are also known as sub-domains.
              </Notice>
              <DnsTable />
              <Footnote>* Priority Record for MX Only</Footnote>
              <Actions>
                <Button $primary>Save Changes</Button>
                <Button>Cancel Changes</Button>
              </Actions>
            </div>
          </Page>
          <Chat>Chatting with Swapnil B.<Svg w={32} h={20}><path d="M2 18L16 3l14 15" stroke="#fff" strokeWidth="4" strokeLinecap="round" /></Svg></Chat>
        </Viewport>
      </Browser>
      <DockArea>
        <DockBar>
          {dock.map((d, i) =>
            d ? (
              <DockItem key={d.name} title={d.name}>
                {d.art}
                {d.run && <Dot />}
                {d.badge && <Badge>{d.badge}</Badge>}
              </DockItem>
            ) : (
              <DockRule key={i} />
            )
          )}
        </DockBar>
      </DockArea>
    </Desktop>
  );
}
